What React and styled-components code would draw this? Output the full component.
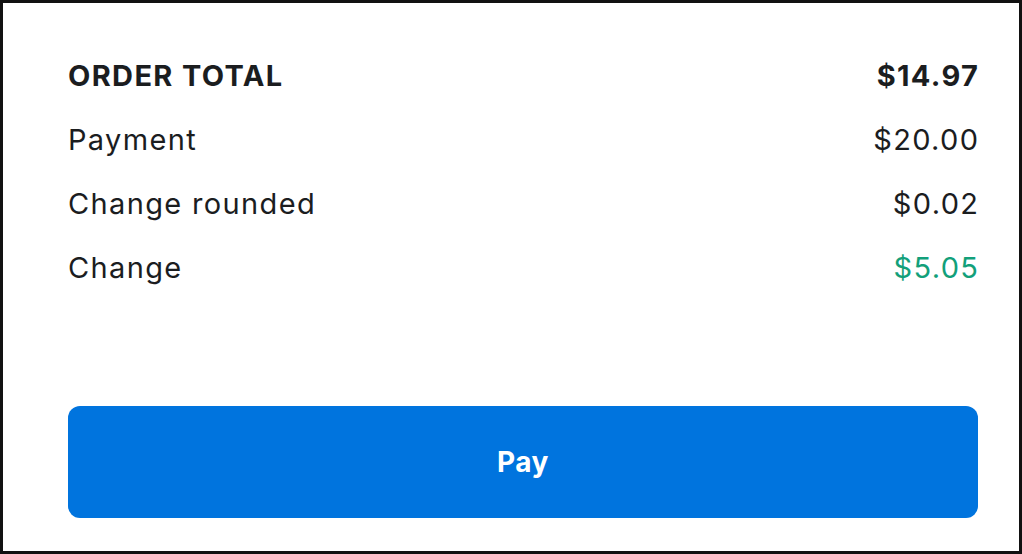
import styled, { createGlobalStyle } from "styled-components";

const Global = createGlobalStyle`
  * {
    box-sizing: border-box;
    margin: 0;
    padding: 0;
  }
  body {
    background: #ffffff;
    font-family: "Inter", "Noto Sans", sans-serif;
  }
`;

const Card = styled.div`
  width: 100vw;
  height: 100vh;
  border: 3px solid #111111;
  background: #ffffff;
  display: flex;
  flex-direction: column;
  padding: 40px 41px 33px 65px;
`;

const Rows = styled.div`
  display: flex;
  flex-direction: column;
`;

const Row = styled.div`
  display: flex;
  align-items: center;
  justify-content: space-between;
  height: 64px;
  font-size: 29px;
  letter-spacing: 1.35px;
  color: #1b1d1f;
  font-weight: ${(p) => (p.$bold ? 700 : 400)};
  text-transform: ${(p) => (p.$bold ? "uppercase" : "none")};
`;

const Value = styled.span`
  margin-right: -1.35px;
  color: ${(p) => p.$color || "#1b1d1f"};
`;

const PayButton = styled.button`
  margin-top: auto;
  width: 100%;
  height: 112px;
  border: 0;
  border-radius: 12px;
  background: #0074de;
  color: #ffffff;
  font-family: "Inter", "Noto Sans", sans-serif;
  font-weight: 700;
  font-size: 28px;
  letter-spacing: 0.5px;
  cursor: pointer;
`;

const lines = [
  { label: "Order total", value: "$14.97", bold: true },
  { label: "Payment", value: "$20.00" },
  { label: "Change rounded", value: "$0.02" },
  { label: "Change", value: "$5.05", color: "#12a07a" },
];

export default function App() {
  return (
    <>
      <Global />
      <Card>
        <Rows>
          {lines.map((l) => (
            <Row key={l.label} $bold={l.bold}>
              <span>{l.label}</span>
              <Value $color={l.color}>{l.value}</Value>
            </Row>
          ))}
        </Rows>
        <PayButton>Pay</PayButton>
      </Card>
    </>
  );
}
